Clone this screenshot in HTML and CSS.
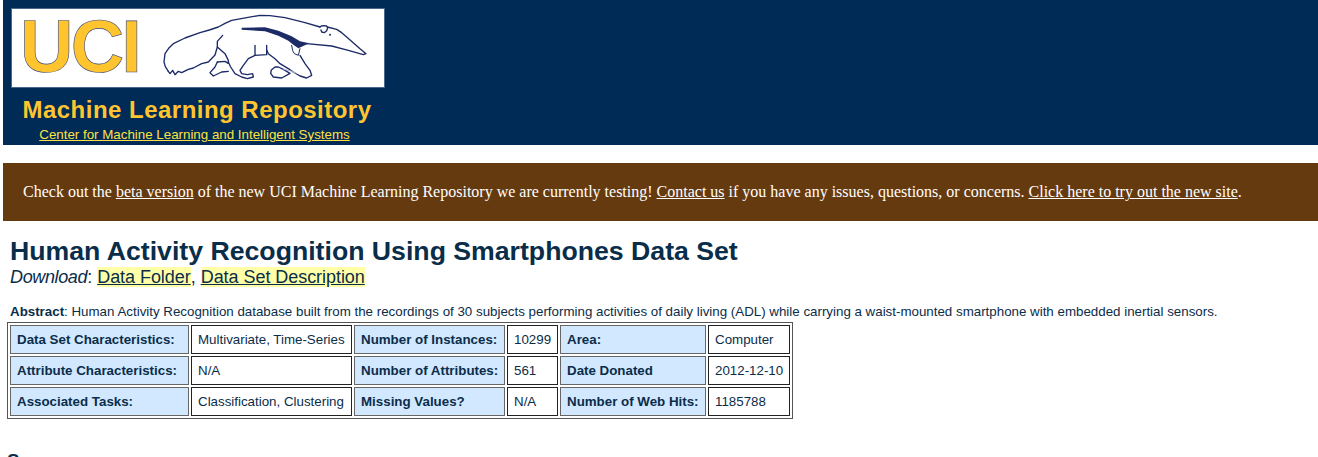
FILE: index.html
```html
<!DOCTYPE html>
<html lang="en">
<head>
<meta charset="utf-8">
<title>UCI Machine Learning Repository</title>
<link rel="stylesheet" href="styles.css">
</head>
<body>
<header class="masthead">
  <div class="logo-column">
    <div class="logo-box">
      <span class="uci">UCI</span>
      <svg class="anteater" viewBox="0 0 690 240" width="230" height="80" aria-hidden="true">
        <polyline class="line" points="55,184 46,170 42,156 45,131 56,115 70,101 105,84 150,68 178,60 205,51 225,40 245,31 290,23 330,16 360,17 405,23 465,38 510,51"/>
        <polyline class="line" points="510,51 514,48 522,47 530,48 533,54 530,62 523,68 515,66 513,60"/>
        <polyline class="line" points="532,51 560,58 575,68 590,81 630,116 648,131 640,134 595,121 545,108 470,101"/>
        <path class="fill" d="M275 53L345 52L385 62L425 79L450 94L478 100L458 109L445 115L430 104L415 92L385 77L345 64L275 59Z"/>
        <polyline class="line thin" points="425,106 428,122 433,131 445,136 450,116"/>
        <polyline class="line" points="450,136 465,161 480,181 485,196 470,204 450,198 430,186 415,176 390,161 375,146 355,131 350,120"/>
        <polyline class="line" points="375,171 364,180 362,190 370,201 395,204 420,190 400,178 385,171 375,171"/>
        <polyline class="faint" points="400,178 420,182 440,190"/>
        <polyline class="line" points="350,106 350,134 315,136 315,106"/>
        <polyline class="line" points="315,136 295,146 280,166 270,181 275,191 292,194 308,191 310,201 292,206 275,201 255,191 242,171 235,156"/>
        <polyline class="line" points="218,76 202,94 202,111 225,131 235,151 235,160"/>
        <polyline class="line" points="202,156 195,171 180,188 190,198 215,186 235,184"/>
        <polyline class="line" points="202,156 225,154 235,160"/>
        <polyline class="line" points="55,184 60,191 68,181 75,194 85,184 95,188 115,178 130,174 155,161 175,156 195,135 202,111"/>
        <circle class="fill" cx="540" cy="74" r="3"/>
      </svg>
    </div>
    <div class="repo-title">Machine Learning Repository</div>
    <a class="center-link" href="#">Center for Machine Learning and Intelligent Systems</a>
  </div>
</header>
<div class="notice">
  Check out the <a href="#">beta version</a> of the new UCI Machine Learning Repository we are currently testing! <a href="#">Contact us</a> if you have any issues, questions, or concerns. <a href="#">Click here to try out the new site</a>.
</div>
<main class="content">
  <h1 class="title">Human Activity Recognition Using Smartphones Data Set</h1>
  <p class="download"><em class="download-label">Download</em>: <a href="#">Data Folder</a>, <a href="#">Data Set Description</a></p>
  <p class="abstract"><b>Abstract</b>: Human Activity Recognition database built from the recordings of 30 subjects performing activities of daily living (ADL) while carrying a waist-mounted smartphone with embedded inertial sensors.</p>
  <table class="facts">
    <colgroup>
      <col class="c1"><col class="c2"><col class="c3"><col class="c4"><col class="c5"><col class="c6">
    </colgroup>
    <tr>
      <th>Data Set Characteristics:</th><td>Multivariate, Time-Series</td>
      <th>Number of Instances:</th><td>10299</td>
      <th>Area:</th><td>Computer</td>
    </tr>
    <tr>
      <th>Attribute Characteristics:</th><td>N/A</td>
      <th>Number of Attributes:</th><td>561</td>
      <th>Date Donated</th><td>2012-12-10</td>
    </tr>
    <tr>
      <th>Associated Tasks:</th><td>Classification, Clustering</td>
      <th>Missing Values?</th><td>N/A</td>
      <th>Number of Web Hits:</th><td>1185788</td>
    </tr>
  </table>
  <h2 class="source">Source:</h2>
</main>
</body>
</html>
```
FILE: styles.css
```css
html, body { margin: 0; padding: 0; background: #fff; }
body { padding-left: 3px; font-family: "Liberation Sans", Arial, sans-serif; color: #0a2d4a; }
.masthead { background: #002b57; height: 145px; padding: 8px 0 0 8px; box-sizing: border-box; }
.logo-column { width: 374px; display: flex; flex-direction: column; align-items: center; }
.logo-box { width: 374px; height: 80px; box-sizing: border-box; background: #fff; border: 1px solid #47688c; display: flex; align-items: flex-start; padding: 1px 0 0 8px; }
.uci { font-size: 74px; line-height: 74px; font-weight: 700; color: #ffc42e; -webkit-text-stroke: .6px #3d4a7a; width: 130px; letter-spacing: -2.8px; }
.anteater { flex: none; filter: blur(.35px); }
.line { fill: none; stroke: #1c2a66; stroke-width: 4; stroke-linecap: round; stroke-linejoin: round; }
.thin { stroke-width: 3; }
.faint { fill: none; stroke: #aab4d4; stroke-width: 3; }
.fill { fill: #1c2a66; }
.repo-title { color: #ffc530; font-size: 24px; font-weight: 700; line-height: 28px; letter-spacing: .48px; margin: 8px 2px 0 0; }
.center-link { color: #ffe23f; font-size: 13.33px; line-height: 15px; margin: 3px 7px 0 0; text-decoration: underline; }
.notice { margin-top: 18px; height: 58px; background: #663a0f; color: #fff; font-family: "Liberation Serif", "Times New Roman", serif; font-size: 16px; line-height: 58px; padding-left: 20px; }
.notice a { color: #fff; }
.content { padding: 0 0 0 4px; }
.title { margin: 0; padding: 15px 0 0 3px; font-size: 26.67px; line-height: 30px; font-weight: 700; color: #0a2d4a; }
.download { margin: 0; padding-left: 3px; font-size: 18px; line-height: 22px; }
.download-label { letter-spacing: -.36px; }
.download a { color: #0a2d4a; background: #ffffa8; letter-spacing: -.05px; }
.abstract { margin: 16px 0 0; padding-left: 3px; font-size: 13.33px; line-height: 15px; }
.facts { margin-top: 3px; width: 786px; table-layout: fixed; border: 1px solid #555; border-spacing: 2px; border-collapse: separate; font-size: 13.33px; }
.c1 { width: 179px; }
.c2 { width: 161px; }
.c3 { width: 151px; }
.c4 { width: 51px; }
.c5 { width: 146px; }
.c6 { width: 82px; }
.facts th, .facts td { height: 29px; box-sizing: border-box; padding: 0 6px; text-align: left; border: 1px solid #222; background: #fff; white-space: nowrap; }
.facts th { background: #d2e8ff; border-color: #666; font-weight: 700; }
.source { margin: 31px 0 0; font-size: 18.67px; }
```
